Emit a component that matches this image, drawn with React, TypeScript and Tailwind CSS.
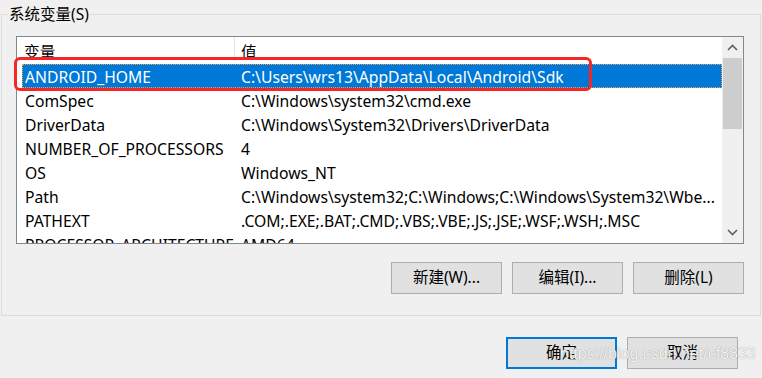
import React from "react";

const rows: [string, string][] = [
  ["ANDROID_HOME", "C:\\Users\\wrs13\\AppData\\Local\\Android\\Sdk"],
  ["ComSpec", "C:\\Windows\\system32\\cmd.exe"],
  ["DriverData", "C:\\Windows\\System32\\Drivers\\DriverData"],
  ["NUMBER_OF_PROCESSORS", "4"],
  ["OS", "Windows_NT"],
  ["Path", "C:\\Windows\\system32;C:\\Windows;C:\\Windows\\System32\\Wbe..."],
  ["PATHEXT", ".COM;.EXE;.BAT;.CMD;.VBS;.VBE;.JS;.JSE;.WSF;.WSH;.MSC"],
  ["PROCESSOR_ARCHITECTURE", "AMD64"],
];

function Btn({ label, primary }: { label: string; primary?: boolean }) {
  return (
    <button
      className={
        "h-[32px] w-[111px] bg-[#e1e1e1] text-[15.5px] text-black flex items-center justify-center " +
        (primary ? "border-2 border-[#0078d7]" : "border border-[#adadad]")
      }
    >
      {label}
    </button>
  );
}

export default function App() {
  return (
    <div
      className="relative w-[762px] h-[378px] overflow-hidden bg-[#f0f0f0] pt-[14px] pl-[1px] text-[15.7px] text-black"
      style={{ fontFamily: "'Noto Sans', 'Noto Sans CJK SC', sans-serif" }}
    >
      {/* group box */}
      <div className="relative w-[760px] h-[302px] border border-[#dcdcdc] pt-[21px] pl-[14px] pr-[16px]">
        <div className="absolute -top-[10px] left-[6px] px-[1px] bg-[#f0f0f0] leading-[18px] text-[15.5px]">
          系统变量(S)
        </div>

        {/* list view */}
        <div className="flex w-[728px] h-[208px] border border-[#828790] bg-white">
          <div className="flex-1 flex flex-col overflow-hidden">
            <div className="relative flex h-[27px] items-center shrink-0 pt-[3px] leading-[20px]">
              <div className="w-[217px] pl-[7px]">变量</div>
              <div className="pl-[7px]">值</div>
              <div className="absolute left-[217px] top-0 w-px h-[24px] bg-[#e5e5e5]" />
            </div>
            <div className="flex flex-col pl-[5px]">
              {rows.map(([k, v], i) => (
                <div
                  key={k}
                  className={
                    "flex h-[24px] items-center shrink-0 whitespace-nowrap pl-[2px] pt-[3px] " +
                    (i === 0
                      ? "bg-[#0078d7] text-white border border-dotted border-[#f0a050]"
                      : "border border-transparent")
                  }
                >
                  <div className="w-[216px] overflow-hidden">{k}</div>
                  <div>{v}</div>
                </div>
              ))}
            </div>
          </div>

          {/* scrollbar */}
          <div className="w-[21px] bg-[#f0f0f0] flex flex-col shrink-0">
            <div className="h-[21px] flex items-center justify-center">
              <svg width="11" height="7" viewBox="0 0 11 7">
                <path d="M1 6 L5.5 1.5 L10 6" fill="none" stroke="#606060" strokeWidth="1.6" />
              </svg>
            </div>
            <div className="h-[71px] mx-[1px] bg-[#cdcdcd]" />
            <div className="flex-1" />
            <div className="h-[21px] flex items-center justify-center">
              <svg width="11" height="7" viewBox="0 0 11 7">
                <path d="M1 1 L5.5 5.5 L10 1" fill="none" stroke="#606060" strokeWidth="1.6" />
              </svg>
            </div>
          </div>
        </div>

        <div className="flex justify-end gap-[10px] mt-[18px]">
          <Btn label="新建(W)..." />
          <Btn label="编辑(I)..." />
          <Btn label="删除(L)" />
        </div>
      </div>

      <div className="flex justify-end gap-[10px] mt-[21px] pr-[24px]">
        <Btn label="确定" primary />
        <Btn label="取消" />
      </div>

      {/* red annotation */}
      <div className="absolute left-[14px] top-[57px] w-[578px] h-[34px] border-[3px] border-[#f42626] rounded-[6px]" />

      {/* watermark */}
      <div
        className="absolute left-[560px] top-[344px] text-[16px] leading-[20px] text-white/90 [text-shadow:0_0_1px_rgba(100,100,100,0.8)] whitespace-nowrap"
        style={{ fontFamily: "'Liberation Sans', Arial, sans-serif" }}
      >
        https://blog.csdn.net/cf8833
      </div>
    </div>
  );
}
